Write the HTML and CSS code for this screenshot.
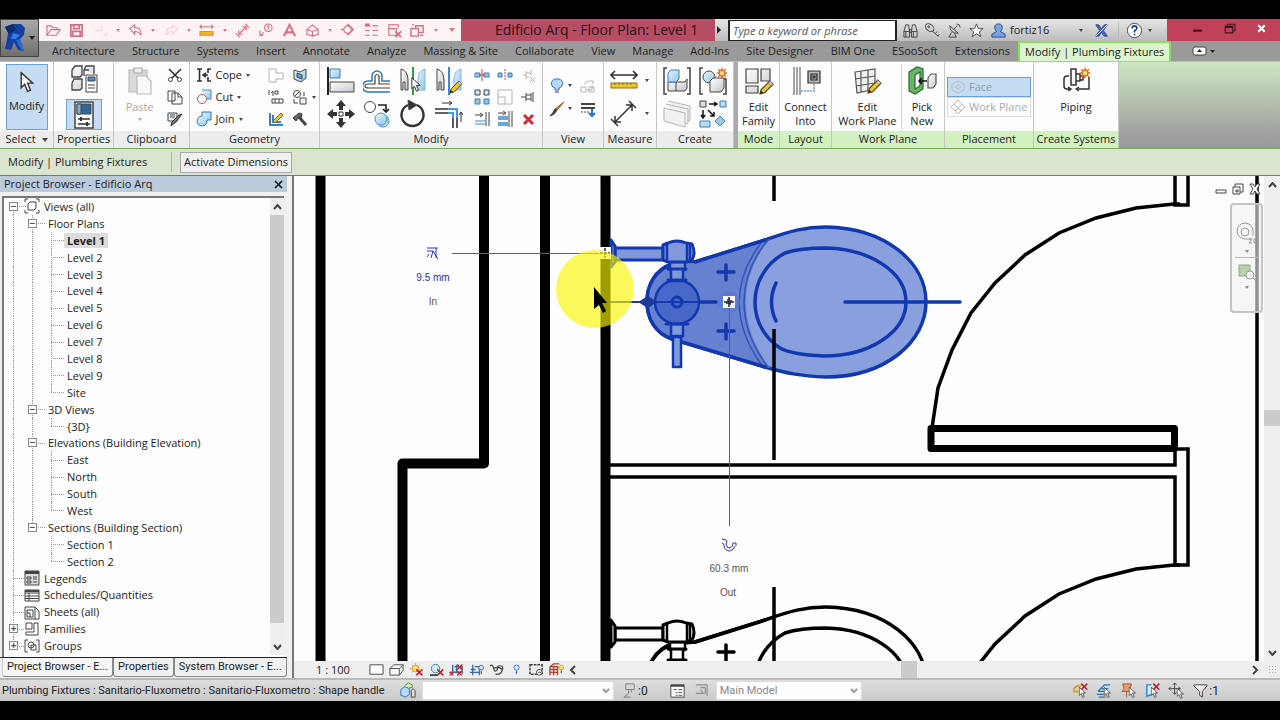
FILE: index.html
```html
<!DOCTYPE html>
<html lang="en">
<head>
<meta charset="utf-8">
<title>Edificio Arq - Floor Plan: Level 1</title>
<link rel="stylesheet" href="styles.css">
</head>
<body>
<svg class="defs" aria-hidden="true">
  <defs>
    <linearGradient id="glass" x1="0" y1="0" x2="1" y2="1"><stop offset="0" stop-color="#eaf6fc"/><stop offset="1" stop-color="#8cc6ea"/></linearGradient>
    <linearGradient id="steel" x1="0" y1="0" x2="1" y2="1"><stop offset="0" stop-color="#ffffff"/><stop offset="1" stop-color="#c4c7cc"/></linearGradient>
    <symbol id="pencil" viewBox="0 0 14 14"><path d="M1 13l1-4 8-8 3 3-8 8z" fill="#f2c62c" stroke="#5a4a20"/><path d="M10 1l3 3-2 1-2-2z" fill="#ddd" stroke="#666" stroke-width=".6"/><path d="M1 13l1-3 2 2z" fill="#222"/></symbol>
    <symbol id="spark" viewBox="0 0 12 12"><path d="M6 0l1.300 3L10.500 1.500 9 4.700 12 6 9 7.300l1.500 3.200L7.300 9 6 12 4.700 9 1.500 10.500 3 7.300 0 6l3-1.300L1.500 1.500 4.700 3z" fill="#e8701c"/><circle cx="6" cy="6" r="2.200" fill="#ffe08a"/></symbol>
    <symbol id="pointer" viewBox="0 0 12 18"><path d="M1 1v13l3-3 2.500 6 2.500-1-2.500-6H11z" fill="#fff" stroke="#333" stroke-width="1.200"/></symbol>
    <symbol id="redx" viewBox="0 0 10 10"><path d="M1 1l8 8M9 1L1 9" stroke="#c8202c" stroke-width="2.200"/></symbol>
    <g id="toilet" stroke-width="3.500" stroke-linejoin="round" stroke-linecap="round">
      <path class="bowl" d="M695 262L765 240C790 231 805 227 826 227C885 228 926 262 926 302C926 342 885 377 826 377C800 376 785 373 765 367L672 339C655 333 647 318 647 302C647 285 655 270 672 264Z"/>
      <path class="neck" d="M693 263L770 239C738 278 738 325 770 368L672 339C655 333 647 318 647 302C647 285 655 270 672 264Z"/>
      <path class="seam" d="M768 240C736 278 736 325 768 367M761 243C732 281 732 323 761 364" stroke-width="1.500"/>
      <path class="edge" d="M695 262L765 240M765 367L672 339C655 333 647 318 647 302C647 285 655 270 672 264"/>
      <path class="ink" d="M826 248C870 249 906 272 906 302C906 332 870 356 824 356C800 355 787 352 780 348C765 338 755 322 755 302C755 280 768 262 785 253C797 249 810 248 826 248Z"/>
      <path class="ink" d="M776 283Q767 302 776 321M845 302H960M653 302H716M726 265V280M718 272H734M726 324V339M718 331H734" stroke-width="3.500"/>
      <circle class="cap" cx="677" cy="302" r="22" stroke-width="2.500"/>
      <circle class="cap" cx="677" cy="302" r="5" stroke-width="3"/>
      <path class="ink" d="M651 302H702" stroke-width="2"/>
      <path class="body" d="M670 262H685V270H683V281H671V270H670ZM671 324H683V336H671ZM673 337H681V367H673Z" stroke-width="2.500"/>
      <path class="ink" d="M668 269H686M668 280H686M666 324H688" stroke-width="3"/>
      <path class="body" d="M615 248H663V260H615Z" stroke-width="3"/>
      <path class="body" d="M611 240L615 246V262L611 267Z" stroke-width="3"/>
      <path class="body" d="M663 245L668 243Q677 239 686 243L692 244Q696 253 692 260L686 262H668L663 260Z" stroke-width="3"/>
      <path class="ink" d="M667 243V261M687 243V261M690 244V260" stroke-width="2.500"/>
    </g>
  </defs>
</svg>

<div class="app">
<header class="top">
  <button class="logo" aria-label="Application menu">
    <svg width="22" height="30" viewBox="0 0 22 30"><path d="M1 4L9 1h8l4 4-1 7-4 4 4 12-6-1-4-8-3 8-6-1 2-9 1-7z" fill="#163f9e"/><path d="M1 4l8-3 3 6-7 4z" fill="#0c2a70"/><path d="M9 10l7 2-4 4-5 0z" fill="#2f7be8"/><path d="M12 17l4-1 4 12-3-1z" fill="#2a68d4"/></svg>
    <i class="caret"></i>
  </button>
  <div class="titlebar">
    <div class="qat">
      <button aria-label="Open"><svg viewBox="0 0 16 16"><path d="M1 13V3h5l1 2h5v2M1 13l4-6h10l-4 6z"/></svg></button>
      <button aria-label="Save"><svg viewBox="0 0 16 16"><path d="M2 2h12v12H2zM5 2v4h6V2M4 14V9h8v5" stroke-width="1.800"/></svg></button>
      <button class="faint" aria-label="Synchronize"><svg viewBox="0 0 16 16"><path d="M2 8h7V3M11 13h3v-3"/></svg></button>
      <i class="caret"></i>
      <button aria-label="Undo"><svg viewBox="0 0 16 16"><path d="M2 6l5-4v3q7-1 7 8-2-4-7-4v3z"/></svg></button>
      <i class="caret"></i>
      <button class="faint" aria-label="Redo"><svg viewBox="0 0 16 16"><path d="M14 6L9 2v3Q2 4 2 13q2-4 7-4v3z"/></svg></button>
      <i class="caret"></i>
      <button aria-label="Measure"><svg viewBox="0 0 16 16"><path d="M1 4h14M3 2L1 4l2 2M13 2l2 2-2 2"/><path d="M1 9h14v4H1z" fill="#f2b41c" stroke="#e08a50"/></svg></button>
      <i class="caret"></i>
      <button aria-label="Aligned dimension"><svg viewBox="0 0 16 16"><path d="M4 12l8-8M4 8v4h4M8 4h4v4M1 11l4 4M11 1l4 4"/></svg></button>
      <button aria-label="Tag"><svg viewBox="0 0 16 16"><circle cx="11" cy="5" r="4"/><path d="M10 4l1-1v4M2 8v5h4M2 14l4-4"/></svg></button>
      <button aria-label="Text"><svg viewBox="0 0 16 16"><path d="M2 14L8 2l6 12M4 10h8" stroke-width="2.200"/></svg></button>
      <button aria-label="3D view"><svg viewBox="0 0 16 16"><path d="M2 7l6-5 6 5v5l-6 2-6-2zM2 7l6 2 6-2M8 9v5"/></svg></button>
      <i class="caret"></i>
      <button aria-label="Section"><svg viewBox="0 0 16 16"><circle cx="8" cy="7" r="4"/><path d="M8 1l6 6-6 6M1 7h3" stroke-width="1.600"/></svg></button>
      <button aria-label="Thin lines"><svg viewBox="0 0 16 16"><path d="M1 3h6M9 3h6M1 8h5M9 8h6M1 13h5M9 13h6"/><path d="M1 2h5" stroke-width="3"/></svg></button>
      <button aria-label="Close hidden windows"><svg viewBox="0 0 16 16"><path d="M2 6V2h10v3M2 6h8v7H2z"/><path d="M9 9l6 6M15 9l-6 6" stroke-width="2"/></svg></button>
      <button aria-label="Switch windows"><svg viewBox="0 0 16 16"><path d="M1 6h8v8H1zM6 6V3h8v7H9M3 3V1M14 13h-3" stroke-width="1.500"/></svg></button>
      <i class="caret"></i>
      <i class="caret wide"></i>
    </div>
    <h1 class="title">Edificio Arq - Floor Plan: Level 1</h1>
    <div class="info">
      <button class="expand" aria-label="Toggle search"><svg width="6" height="8"><path d="M1 0l4 4-4 4z" fill="#222"/></svg></button>
      <input class="search" type="text" placeholder="Type a keyword or phrase" aria-label="Search">
      <button aria-label="Find"><svg viewBox="0 0 18 18"><path d="M2 10l2-7h3l1 7M10 10l1-7h3l2 7M2 10h6v6H2zM10 10h6v6h-6zM8 8h2v3H8zM4 10v6M12 10v6"/></svg></button>
      <button aria-label="Key"><svg viewBox="0 0 18 18"><path d="M8 9l7 6 1-2M12 12l2-2"/><ellipse cx="6" cy="6" rx="5" ry="3.500" transform="rotate(40 6 6)"/><circle cx="5" cy="5" r="1"/></svg></button>
      <button aria-label="Communication Center"><svg viewBox="0 0 18 18"><path d="M4 4q0 8 9 8zM8 8l4-4M6 11l-3 5h8l-2-4M11 2q4 0 4 4"/></svg></button>
      <button aria-label="Favorites"><svg viewBox="0 0 18 18"><path d="M9 2l2 5h5l-4 3.500 1.500 5L9 12.500 4.500 15.500 6 10.500 2 7h5z" fill="#fff"/></svg></button>
      <button class="user"><svg viewBox="0 0 18 18"><path d="M9 2c6 0 4 7 2 8l5 3v3H2v-3l5-3C5 9 3 2 9 2z" fill="#7aa3e0" stroke="#29488c"/></svg>fortiz16</button>
      <i class="caret"></i>
      <button class="exchange" aria-label="Exchange"><svg viewBox="0 0 18 18"><path d="M3 3h3l3 4 3-4h3l-4 6 4 6h-3l-3-4-3 4H3l4-6z" fill="#496cc0" stroke="#24418c"/><path d="M3 15L15 3" stroke="#fff"/></svg></button>
      <button class="help" aria-label="Help"><svg viewBox="0 0 18 18"><circle cx="9" cy="9" r="7.500" fill="#fff"/><path d="M6.500 7q0-3 2.500-3t2.500 2.500Q11.500 8 9 9.500v1.500M9 12.500V14" stroke="#1b3c94" stroke-width="1.800"/></svg></button>
      <i class="caret"></i>
    </div>
    <div class="window">
      <button aria-label="Minimize"><svg viewBox="0 0 12 12"><path d="M2 8h8" stroke-width="2"/></svg></button>
      <button aria-label="Restore"><svg viewBox="0 0 12 12"><path d="M2 4h7v6H2zM4 4V2h7v6H9M2 5h7"/></svg></button>
      <button aria-label="Close"><svg class="close" viewBox="0 0 12 12"><path d="M3 3l6 6M9 3L3 9" stroke-width="2"/></svg></button>
    </div>
  </div>
  <nav class="tabs">
    <button>Architecture</button><button>Structure</button><button>Systems</button><button>Insert</button><button>Annotate</button><button>Analyze</button><button>Massing &amp; Site</button><button>Collaborate</button><button>View</button><button>Manage</button><button>Add-Ins</button><button>Site Designer</button><button>BIM One</button><button>ESooSoft</button><button>Extensions</button><button class="on">Modify | Plumbing Fixtures</button>
    <button class="cycle" aria-label="Minimize ribbon"><svg width="24" height="10"><rect x="1" y="1" width="13" height="8" rx="2" fill="#fff" stroke="#444"/><path d="M5 6l2.500-3L10 6z" fill="#222"/><path d="M18 4h5l-2.500 3z" fill="#222"/></svg></button>
  </nav>
</header>

<section class="ribbon">
  <div class="panel w54">
    <div class="tools"><button class="big on select"><svg width="14" height="22" viewBox="0 0 12 18"><use href="#pointer"/></svg><span>Modify</span></button></div>
    <div class="name">Select <i class="caret wide"></i></div>
  </div>
  <div class="panel w60">
    <div class="tools stack">
      <button aria-label="Type properties"><svg width="30" height="30" viewBox="0 0 30 30"><path d="M3 6l3-4h7v9l-2 2H3zM15 6l2-4h8v8M3 19l2-4h8v9l-2 2H3zM15 6h5M15 6v6" fill="url(#steel)" stroke="#444" stroke-width="1.300"/><rect x="17" y="11" width="11" height="17" fill="#fff" stroke="#444"/><path d="M19 13h7v4h-7z" fill="#4d8cc8"/><path d="M19 21h7M19 24h7" stroke="#444"/></svg></button>
      <button class="on" aria-label="Properties"><svg width="24" height="28" viewBox="0 0 24 28"><rect x="3" y="1" width="18" height="26" fill="#fff" stroke="#444" stroke-width="1.500"/><path d="M5 3h14v10H5z" fill="#2f6898"/><path d="M5 3h4v10H5z" fill="#7db2dc"/><path d="M6 18h12M6 23h12" stroke="#333" stroke-width="1.300"/><path d="M9 16v4M15 21v4" stroke="#333" stroke-width="2"/></svg></button>
    </div>
    <div class="name">Properties</div>
  </div>
  <div class="panel w75">
    <div class="tools">
      <button class="big off"><svg width="28" height="30" viewBox="0 0 28 30"><path d="M3 4h18v22H3z" fill="#d9d9d9" stroke="#bbb"/><path d="M8 2h8v5H8z" fill="#eee" stroke="#aaa"/><path d="M11 10h9l5 5v13H11z" fill="#f8f8f8" stroke="#bbb"/></svg><span>Paste</span><i class="caret"></i></button>
      <div class="col">
        <button aria-label="Cut"><svg viewBox="0 0 16 16"><path d="M2 2l9 9M14 2l-9 9" stroke="#333" stroke-width="1.600"/><circle cx="3.500" cy="12.500" r="2"/><circle cx="12.500" cy="12.500" r="2"/></svg></button>
        <button aria-label="Copy"><svg viewBox="0 0 16 16"><path d="M1 2h7v10H1zM5 4h6l4 4v7H5zM11 4v4h4" fill="#fff"/></svg></button>
        <button aria-label="Match type"><svg viewBox="0 0 16 16"><path d="M1 2h9v8H1zM3 4h5M3 6h5" fill="#eaf3fb"/><path d="M15 3l-6 8-5 4 1-4 7-7z" fill="#777" stroke="#333"/></svg></button>
      </div>
    </div>
    <div class="name">Clipboard</div>
  </div>
  <div class="panel w130">
    <div class="tools">
      <div class="col words">
        <button><svg viewBox="0 0 16 16"><path d="M1 2h5M1 14h5M3.500 2v12M7 8h5M10 6L7 8l3 2M15 2h-3v4M15 14h-3v-4" stroke="#333" stroke-width="1.600"/></svg>Cope <i class="caret"></i></button>
        <button><svg viewBox="0 0 16 16"><path d="M6 1h9v9h-5" fill="url(#glass)" stroke="#4a86b4"/><circle cx="6" cy="10" r="4.500" fill="#fff" stroke="#c05050"/></svg>Cut <i class="caret"></i></button>
        <button><svg viewBox="0 0 16 16"><path d="M6 1h9v8h-4a5 5 0 1 1-5-4z" fill="url(#glass)" stroke="#2f74ac"/></svg>Join <i class="caret"></i></button>
      </div>
      <div class="col">
        <button class="dim" aria-label="Wall joins"><svg viewBox="0 0 16 16"><path d="M1 2h7v4h7v6H8v3H1z"/></svg></button>
        <button aria-label="Beam joins"><svg viewBox="0 0 16 16"><path d="M1 1v5M3 4l2-2v5M7 2h3v3H7zM4 10h11v4H4zM7 10v4M11 10v4"/></svg></button>
        <button aria-label="Paint"><svg viewBox="0 0 16 16"><path d="M2 2v12h13M5 4v7h8" stroke="#3b7fc0" stroke-width="2"/><path d="M5 10l8-8 2 2-8 8z" fill="#f2c14a" stroke="#8a6020"/></svg></button>
      </div>
      <div class="col">
        <button aria-label="Split face"><svg viewBox="0 0 16 16"><path d="M2 3l6 2 6-3v9l-5 4-7-3z" fill="url(#glass)"/><path d="M5 6l5 2v4l-5-2z" fill="#5ea4dc"/></svg></button>
        <button aria-label="Demolish"><svg viewBox="0 0 16 16"><circle cx="5" cy="5" r="3.500"/><path d="M3 7l4-4M8 9h6v6H8zM2 10v4h4M12 3v4"/></svg></button>
        <button aria-label="Hammer"><svg viewBox="0 0 16 16"><path d="M1 7l6-5 3 1-1 4-3 0-2 3z" fill="#666" stroke="#333"/><path d="M7 6l7 8" stroke="#444" stroke-width="3"/></svg></button>
      </div>
      <i class="caret"></i>
    </div>
    <div class="name">Geometry</div>
  </div>
  <div class="panel w223">
    <div class="tools">
      <div class="grid4">
        <button aria-label="Align"><svg viewBox="0 0 28 28"><path d="M1 0v28" stroke="#222" stroke-width="2"/><path d="M3 2h10v9H3z" fill="url(#glass)" stroke="#3b7fb4"/><path d="M3 15h24v10H3z" fill="url(#steel)"/></svg></button>
        <button aria-label="Offset"><svg viewBox="0 0 28 28"><path d="M27 25H5a5 5 0 0 1 0-11h4V9a5 5 0 0 1 10 0v5h8" stroke="#2f78b0" stroke-width="1.500"/><path d="M27 21H6q-4 0-4-2t3-2h7V9q2-3 4 0v8h11" stroke="#444" stroke-width="1.200"/></svg></button>
        <button aria-label="Mirror pick axis"><svg viewBox="0 0 28 28"><path d="M2 2q7 2 7 11v10H6v-8H4v8H2z" fill="url(#steel)"/><path d="M26 2q-7 2-7 11v10h7z" fill="url(#glass)" stroke="#8bb6d4"/><path d="M14 0v28" stroke="#2fa04a" stroke-width="2"/><use href="#pointer" x="12" y="10" width="10" height="15"/></svg></button>
        <button aria-label="Mirror draw axis"><svg viewBox="0 0 28 28"><path d="M2 2q7 2 7 11v10H6v-8H4v8H2z" fill="url(#steel)"/><path d="M26 2q-7 2-7 11v10h7z" fill="url(#glass)" stroke="#8bb6d4"/><path d="M14 0v28" stroke="#3b8ad0" stroke-width="2"/><use href="#pencil" x="14" y="13" width="14" height="14"/></svg></button>
        <button aria-label="Move"><svg viewBox="0 0 28 28"><path d="M14 0l5 6h-3v4h-4V6H9zM14 28l5-6h-3v-4h-4v4H9zM0 14l6-5v3h4v4H6v3zM28 14l-6-5v3h-4v4h4v3z" fill="#333" stroke="none"/><path d="M12 12h4v4h-4z" stroke="#333"/></svg></button>
        <button aria-label="Copy element"><svg viewBox="0 0 28 28"><circle cx="7" cy="7" r="5.500" fill="#fff"/><path d="M15 5h8v6M20 9l3 3 3-3" stroke="#222" stroke-width="1.600"/><circle cx="20" cy="21" r="6" fill="#b8dcf2" stroke="#4a90c4"/><circle cx="18" cy="19" r="6" fill="url(#glass)" stroke="#4a90c4"/></svg></button>
        <button aria-label="Rotate"><svg viewBox="0 0 28 28"><path d="M18 5A11 11 0 1 1 9 5" stroke="#333" stroke-width="2.400"/><path d="M9 0l9 5-8 5z" fill="#333"/></svg></button>
        <button aria-label="Trim"><svg viewBox="0 0 28 28"><path d="M0 9h14M0 13h14M18 17v11M22 17v11" stroke="#333" stroke-width="1.600"/><path d="M13 9h9v9M13 13h5v5" stroke="#4a9bd4" stroke-width="2"/><path d="M7 3h10M14 1l3 2-3 2M26 22V12M24 15l2-3 2 3" stroke="#333"/></svg></button>
      </div>
      <div class="grid3">
        <button aria-label="Split"><svg viewBox="0 0 16 16"><path d="M1 6h5v4H1zM10 6h5v4h-5z" fill="#8cc6ea" stroke="#3b7fb4"/><path d="M8 2v12M5 8h6" stroke="#c44"/></svg></button>
        <button aria-label="Split with gap"><svg viewBox="0 0 16 16"><path d="M1 6h4v4H1zM11 6h4v4h-4z" fill="#8cc6ea" stroke="#3b7fb4"/><path d="M8 2v12" stroke="#c44" stroke-dasharray="2 1"/></svg></button>
        <button class="dim" aria-label="Unpin"><svg viewBox="0 0 16 16"><path d="M3 8h3M6 4v8M6 6h5M6 10h3M11 3v5M10 10l5 5M15 10l-5 5"/></svg></button>
        <button aria-label="Array"><svg viewBox="0 0 16 16"><path d="M1 1h5v5H1zM10 1h5v5h-5z" fill="#cfe6f6"/><path d="M1 10h5v5H1zM10 10h5v5h-5z" fill="#8cc6ea" stroke="#3b7fb4"/></svg></button>
        <button class="dim" aria-label="Scale"><svg viewBox="0 0 16 16"><path d="M1 1h14v14H1zM1 8h7v7"/></svg></button>
        <button aria-label="Pin"><svg viewBox="0 0 16 16"><path d="M1 8h5M6 4v8M6 6h5M6 10h5M11 4v8M13 3v10"/></svg></button>
        <button aria-label="Trim single"><svg viewBox="0 0 16 16"><path d="M1 4h7M6 2l3 2-3 2M12 1v14M15 1v14"/><path d="M1 10h10M1 13h10" stroke="#3b8ad0"/></svg></button>
        <button aria-label="Trim multiple"><svg viewBox="0 0 16 16"><path d="M1 2h7M6 0l3 2-3 2M12 0v16M15 0v16"/><path d="M1 6h10M1 8h10M1 12h10M1 14h10" stroke="#3b8ad0" stroke-width="1.300"/></svg></button>
        <button aria-label="Delete"><svg viewBox="0 0 16 16"><path d="M4 4l9 9M13 4l-9 9" stroke="#d02c3c" stroke-width="3"/></svg></button>
      </div>
    </div>
    <div class="name">Modify</div>
  </div>
  <div class="panel w61">
    <div class="tools"><div class="gridv">
      <button aria-label="Hide"><svg viewBox="0 0 16 16"><path d="M8 1a4.500 4.500 0 0 1 2 9v2H6v-2A4.500 4.500 0 0 1 8 1z" fill="#b4d8f8" stroke="#3468b8"/><path d="M6 14h4"/></svg></button><i class="caret"></i>
      <button class="dim" aria-label="Displace"><svg viewBox="0 0 16 16"><path d="M1 9h5v5H1zM6 12h6V7M9 9h5v5H9zM4 6l4-3h5v3"/></svg></button>
      <button aria-label="Override"><svg viewBox="0 0 16 16"><path d="M15 1l-7 8-2-1z" fill="#d49040" stroke="#8a5a20"/><path d="M8 9q-2 5-7 6 3-3 5-7z" fill="#444"/></svg></button><i class="caret"></i>
      <button aria-label="Linework"><svg viewBox="0 0 16 16"><path d="M1 3h14M1 7h14" stroke-width="2"/><path d="M1 11h8" stroke-dasharray="2 1"/><path d="M12 8v6M9 12l3 3 3-3" stroke="#2d70c4" stroke-width="2"/></svg></button>
    </div></div>
    <div class="name">View</div>
  </div>
  <div class="panel w53">
    <div class="tools"><div class="gridm">
      <button aria-label="Measure between"><svg viewBox="0 0 28 28"><path d="M1 8h26M5 4L1 8l4 4M23 4l4 4-4 4" stroke="#333" stroke-width="1.600"/><path d="M1 16h26v5H1z" fill="#f2c22c" stroke="#8a6a14"/><path d="M5 16v2M9 16v2M13 16v2M17 16v2M21 16v2" stroke="#8a6a14"/></svg></button><i class="caret"></i>
      <button aria-label="Dimension"><svg viewBox="0 0 28 28"><path d="M5 22L22 5M5 16v6h6M16 5h6v6M1 19l7 7M19 1l7 7" stroke="#333" stroke-width="1.500"/></svg></button><i class="caret"></i>
    </div></div>
    <div class="name">Measure</div>
  </div>
  <div class="panel w77">
    <div class="tools"><div class="grid2">
      <button aria-label="Create assembly"><svg viewBox="0 0 28 28"><path d="M4 1H1v26h3M24 1h3v26h-3" stroke-width="1.500"/><path d="M5 15h17l2-3v9l-2 3H5zM13 15v9" fill="url(#steel)"/><path d="M5 6l3-3h8v9l-3 3H5z" fill="url(#glass)" stroke="#3b7fb4"/></svg></button>
      <button aria-label="Create group"><svg viewBox="0 0 28 28"><path d="M4 1H1v26h3M24 12h3v15h-3" stroke-width="1.500"/><circle cx="10" cy="10" r="6" fill="url(#glass)"/><path d="M11 14l3-3h11v10l-3 4H11z" fill="url(#steel)"/><use href="#spark" x="17" y="0" width="12" height="12"/></svg></button>
      <button class="dim" aria-label="Create parts"><svg viewBox="0 0 28 28"><path d="M5 1l22 5v14l-3 1M3 4l22 5v14l-3 1M1 8l21 5v14L1 21z" fill="#f1f1f1"/></svg></button>
      <button aria-label="Create similar"><svg viewBox="0 0 28 28"><path d="M1 1h6v6H1z" fill="#ddd"/><path d="M21 1h6v6h-6zM1 21h10v6H1z" fill="url(#glass)" stroke="#3b7fb4"/><path d="M21 16l5 5-5 5-5-5z" fill="#9cc8ec" stroke="#3b7fb4"/><path d="M10 4h8M15 2l3 2-3 2M4 10v8M2 15l2 3 2-3M9 10l6 6M15 12v4h-4" stroke="#111" stroke-width="1.500"/></svg></button>
    </div></div>
    <div class="name">Create</div>
  </div>
  <div class="panel green first w46">
    <div class="tools"><button class="big"><svg width="30" height="30" viewBox="0 0 30 30"><path d="M2 3h12v14H2zM17 3h9v12h-9zM2 20h12v7H2z" fill="url(#steel)" stroke="#444"/><use href="#pencil" x="15" y="14" width="15" height="15"/></svg><span>Edit<br>Family</span></button></div>
    <div class="name">Mode</div>
  </div>
  <div class="panel green w52">
    <div class="tools"><button class="big"><svg width="30" height="30" viewBox="0 0 30 30"><path d="M3 1v28M6 1v28M9 1v28" stroke="#888" stroke-width="1.500"/><path d="M17 5h12v12H17z" fill="#bbb" stroke="#333"/><path d="M20 8h6v6h-6zM22 10h2v2h-2z" stroke="#222" fill="none"/><path d="M23 18v7H10" stroke="#2d80c4" stroke-dasharray="2 1" fill="none"/></svg><span>Connect<br>Into</span></button></div>
    <div class="name">Layout</div>
  </div>
  <div class="panel green w113">
    <div class="tools">
      <button class="big broad"><svg width="30" height="30" viewBox="0 0 30 30"><path d="M3 6l20-3v20L5 27zM9 5v21M16 4v20M3 13l20-3M4 20l19-3" fill="#eee" stroke="#555"/><use href="#pencil" x="15" y="13" width="15" height="15"/></svg><span>Edit<br>Work Plane</span></button>
      <button class="big divided"><svg width="30" height="30" viewBox="0 0 30 30"><path d="M2 6l8-5 6 2v20l-8 5-6-3z" fill="#6ab46a" stroke="#246a2c"/><path d="M8 9l5-3v14l-5 3z" fill="#fff" stroke="#246a2c"/><path d="M12 15h8M15 12l-3 3 3 3" stroke="#111" stroke-width="1.600" fill="none"/><path d="M21 12l3-4h5v10l-3 4h-5z" fill="url(#steel)" stroke="#555"/></svg><span>Pick<br>New</span></button>
    </div>
    <div class="name">Work Plane</div>
  </div>
  <div class="panel green w89">
    <div class="tools place">
      <button class="row on"><svg viewBox="0 0 16 16"><path d="M2 5l6-3 6 3v6l-6 3-6-3zM5 8l3-2 3 2-3 2z"/></svg>Face</button>
      <button class="row"><svg viewBox="0 0 16 16"><path d="M8 1l7 7-7 7-7-7zM4 5l7 7M12 5l-7 7"/></svg>Work Plane</button>
    </div>
    <div class="name">Placement</div>
  </div>
  <div class="panel green w85">
    <div class="tools"><button class="big"><svg width="30" height="30" viewBox="0 0 30 30"><path d="M10 3h5v16h-5zM15 8h4v7h-4M19 10h3v4h-3M8 10H6q-3 0-3 3v7q0 3 3 3h4M7 21l3 2-3 2M15 23h13V11" fill="none" stroke="#333" stroke-width="1.500"/><path d="M18 21l-3 2 3 2" stroke="#333" fill="none"/><use href="#spark" x="18" y="1" width="12" height="12"/></svg><span>Piping</span></button></div>
    <div class="name">Create Systems</div>
  </div>
</section>

<div class="options"><span>Modify | Plumbing Fixtures</span><button>Activate Dimensions</button></div>

<main class="work">
  <aside class="dock">
    <div class="dock-head"><h2>Project Browser - Edificio Arq</h2><button aria-label="Close browser"><svg width="9" height="9"><path d="M1 1l7 7M8 1L1 8" stroke="#111" stroke-width="1.600"/></svg></button></div>
    <div class="dock-body">
      <ul class="tree">
        <li><b class="c t first"><button aria-label="Collapse">−</button></b><svg class="ti" viewBox="0 0 16 16"><path d="M4 1H1v3M12 1h3v3M1 12v3h3M15 12v3h-3M4 6l2-2h6v6l-2 2H4z"/></svg><span>Views (all)</span></li>
        <li><b class="c v"></b><b class="c t"><button aria-label="Collapse">−</button></b><span class="sub">Floor Plans</span></li>
        <li><b class="c v"></b><b class="c v"></b><b class="c h"></b><span class="sub sel">Level 1</span></li>
        <li><b class="c v"></b><b class="c v"></b><b class="c h"></b><span class="sub">Level 2</span></li>
        <li><b class="c v"></b><b class="c v"></b><b class="c h"></b><span class="sub">Level 3</span></li>
        <li><b class="c v"></b><b class="c v"></b><b class="c h"></b><span class="sub">Level 4</span></li>
        <li><b class="c v"></b><b class="c v"></b><b class="c h"></b><span class="sub">Level 5</span></li>
        <li><b class="c v"></b><b class="c v"></b><b class="c h"></b><span class="sub">Level 6</span></li>
        <li><b class="c v"></b><b class="c v"></b><b class="c h"></b><span class="sub">Level 7</span></li>
        <li><b class="c v"></b><b class="c v"></b><b class="c h"></b><span class="sub">Level 8</span></li>
        <li><b class="c v"></b><b class="c v"></b><b class="c h"></b><span class="sub">Level 9</span></li>
        <li><b class="c v"></b><b class="c v"></b><b class="c h end"></b><span class="sub">Site</span></li>
        <li><b class="c v"></b><b class="c t"><button aria-label="Collapse">−</button></b><span class="sub">3D Views</span></li>
        <li><b class="c v"></b><b class="c v"></b><b class="c h end"></b><span class="sub">{3D}</span></li>
        <li><b class="c v"></b><b class="c t"><button aria-label="Collapse">−</button></b><span class="sub">Elevations (Building Elevation)</span></li>
        <li><b class="c v"></b><b class="c v"></b><b class="c h"></b><span class="sub">East</span></li>
        <li><b class="c v"></b><b class="c v"></b><b class="c h"></b><span class="sub">North</span></li>
        <li><b class="c v"></b><b class="c v"></b><b class="c h"></b><span class="sub">South</span></li>
        <li><b class="c v"></b><b class="c v"></b><b class="c h end"></b><span class="sub">West</span></li>
        <li><b class="c v"></b><b class="c t end"><button aria-label="Collapse">−</button></b><span class="sub">Sections (Building Section)</span></li>
        <li><b class="c v"></b><b class="c"></b><b class="c h"></b><span class="sub">Section 1</span></li>
        <li><b class="c v"></b><b class="c"></b><b class="c h end"></b><span class="sub">Section 2</span></li>
        <li><b class="c h"></b><svg class="ti" viewBox="0 0 16 16"><path d="M1 1h14v14H1z" fill="#ddd"/><path d="M1 2.500h14" stroke-width="3"/><path d="M3 7h4v2H3zM3 11h4v2H3zM9 7h4M9 9h4M9 12h4"/></svg><span>Legends</span></li>
        <li><b class="c h"></b><svg class="ti" viewBox="0 0 16 16"><path d="M1 3h14v11H1zM1 6h14M1 9h14M1 11.500h14M5 6v8"/><path d="M1 4h14" stroke-width="2"/></svg><span>Schedules/Quantities</span></li>
        <li><b class="c h"></b><svg class="ti" viewBox="0 0 16 16"><path d="M1 3h10l4 4v8H1zM11 3v12M3 6h6v7H3zM3 9h3v4"/></svg><span>Sheets (all)</span></li>
        <li><b class="c t"><button aria-label="Expand">+</button></b><svg class="ti" viewBox="0 0 16 16"><path d="M2 2h6v6H2zM10 2h4v12H2v-3h8z"/></svg><span>Families</span></li>
        <li><b class="c t end"><button aria-label="Expand">+</button></b><svg class="ti" viewBox="0 0 16 16"><path d="M4 2H1v12h3M12 2h3v12h-3M7 7h5v5H7z"/><circle cx="7" cy="7" r="3"/></svg><span>Groups</span></li>
      </ul>
      <div class="vscroll"><button aria-label="Scroll up"><svg width="9" height="6"><path d="M1 5l3.500-4L8 5" class="chev"/></svg></button><i class="thumb"></i><button aria-label="Scroll down"><svg width="9" height="6"><path d="M1 1l3.500 4L8 1" class="chev"/></svg></button></div>
    </div>
    <div class="dock-tabs"><button class="on">Project Browser - E...</button><button>Properties</button><button>System Browser - E...</button></div>
  </aside>

  <section class="view">
    <div class="canvas-row">
      <div class="canvas">
        <svg class="plan" viewBox="294 176 970 485" preserveAspectRatio="xMinYMin slice" role="img" aria-label="Floor plan">
          <g stroke="#000" fill="none">
            <path d="M320.500 170V670M484 170V463.500H402.500V670M545 170V670M605.500 170V670" stroke-width="10" stroke-linejoin="round"/>
            <path d="M774 170V201M774 587V670" stroke-width="3.500"/>
            <path d="M610 465H1175V450M610 477H1175V565H1188V449H1177M1175 170V205H1188V170M1257 170V670" stroke-width="3.500"/>
            <path d="M1180 204H1174L1136 208 1096 218 1059 233 1025 255 995 283 971 313 952 350 938 388 932 428" stroke-width="3.500"/>
            <path d="M1180 565H1174L1136 569 1096 579 1059 594 1025 616 995 644 975 669" stroke-width="3.500"/>
            <path d="M931 428.500H1174.500V448.500H931Z" stroke-width="7" stroke-linejoin="round"/>
          </g>
          <use href="#toilet" class="plain" transform="translate(0 380)"/>
          <use href="#toilet" class="picked"/>
          <path d="M610 302H652M640 302l8-5 7 5-7 5z" stroke="#1a3a9c" stroke-width="2" fill="#1a3a9c"/>
          <path d="M774 329V460" stroke="#000" stroke-width="3.500"/>
          <path d="M452 253.500H600M729.500 308V526" stroke="#5a50c4"/>
          <circle cx="729" cy="302" r="11" fill="#5878cc" opacity=".6"/>
          <g fill="#fff"><path d="M723 296h12v12h-12z"/><path d="M599 247h12v12h-12z"/></g>
          <g stroke="#123" stroke-width="1.500" fill="none"><path d="M729 297v10M724 302h10M727 300h4v4h-4zM605 248v10M600 253h10" stroke-dasharray="3 1"/></g>
          <circle cx="595" cy="289" r="39" fill="#f8f600" opacity=".64"/>
          <path d="M594 287V309L599 305 603 313 606 311 602 303H607Z" fill="#000"/>
          <g stroke="#3030c0" fill="none"><path d="M427 248h11M427 251h6l5 8M436 248v10M429 254l-2 3M433 251l-2 7"/><path d="M722 539l4 1q2 2 0 4 1 5 4 4t3-5h3v3M722 543q2 0 2 3 1 5 6 5 4-1 5-5"/></g>
          <g class="notes" text-anchor="middle"><text x="433" y="281" class="dim-in">9.5 mm</text><text x="433" y="305">In</text><text x="729" y="572">60.3 mm</text><text x="728" y="596">Out</text></g>
        </svg>
        <div class="mdi">
          <button aria-label="Minimize view"><svg viewBox="0 0 12 12"><path d="M1 7h10v3H1z"/></svg></button>
          <button aria-label="Restore view"><svg viewBox="0 0 12 12"><path d="M1 4h7v7H1zM3 4V1h8v8H8M4 7h2v2H4z"/></svg></button>
          <button aria-label="Close view"><svg viewBox="0 0 12 12"><path d="M1 1h3l2 3 2-3h3L8 6l3 5H8L6 8l-2 3H1l3-5z"/></svg></button>
        </div>
        <div class="navbar">
          <button aria-label="Steering wheel"><svg width="24" height="24" viewBox="0 0 24 24"><path d="M16 17H10a8 8 0 1 1 8-8v5"/><circle cx="10" cy="10" r="4"/><path d="M14 17h3l-3 4h3M19 17h2v4h-2z"/></svg></button>
          <i class="caret"></i><hr>
          <button aria-label="Zoom region"><svg width="20" height="20" viewBox="0 0 20 20"><path d="M2 3h11v11H2z" fill="#b9d0ae" stroke="#8fa888"/><circle cx="13" cy="13" r="4" fill="#f4f4f4"/><path d="M16 16l3 3"/></svg></button>
          <i class="caret"></i>
        </div>
      </div>
      <div class="vscroll main"><button aria-label="Scroll up"><svg width="9" height="6"><path d="M1 5l3.500-4L8 5" class="chev"/></svg></button><i class="thumb"></i><button aria-label="Scroll down"><svg width="9" height="6"><path d="M1 1l3.500 4L8 1" class="chev"/></svg></button></div>
    </div>
    <div class="viewbar">
      <button class="scale">1 : 100</button>
      <button aria-label="Detail level"><svg viewBox="0 0 16 16"><path d="M1 3h14v10H1z" fill="#fff"/></svg></button>
      <button aria-label="Visual style"><svg viewBox="0 0 16 16"><path d="M1 7l4-4h10v6l-4 5H1zM1 7h10v7M11 7l4-4" fill="#fff"/></svg></button>
      <button aria-label="Sun path off"><svg viewBox="0 0 16 16"><circle cx="7" cy="7" r="3.500" fill="#fce06a" stroke="#d89a20"/><path d="M7 1v2M1 7h2M3 3l1 1M11 3l-1 1M3 11l1-1" stroke="#d89a20"/><use href="#redx" x="7" y="7" width="8" height="8"/></svg></button>
      <button aria-label="Shadows off"><svg viewBox="0 0 16 16"><circle cx="7" cy="7" r="4.500" fill="#d4e8f8" stroke="#3b7fb4"/><path d="M1 14h8" stroke-width="2"/><use href="#redx" x="8" y="7" width="8" height="8"/></svg></button>
      <button aria-label="Crop view"><svg viewBox="0 0 16 16"><path d="M4 3v10M1 11h12M6 5h8v8M8 3v9" stroke="#3b6ca4" stroke-width="1.600"/><use href="#redx" x="8" y="2" width="7" height="7"/><use href="#redx" x="8" y="9" width="6" height="6"/><use href="#redx" x="0" y="10" width="5" height="5"/></svg></button>
      <button aria-label="Show crop region"><svg viewBox="0 0 16 16"><path d="M4 3v11M1 11h10M6 5h5v9M2 8h5" stroke="#3b6ca4" stroke-width="1.400"/><circle cx="13" cy="6" r="2.500" fill="#cfe4fa" stroke="#3b7fb4"/><path d="M13 9v4"/></svg></button>
      <button aria-label="Reveal hidden"><svg viewBox="0 0 16 16"><path d="M1 4q3-2 4 3t4 1q-1-4 3-4t2 5-7 4M5 7q5-3 9 1" stroke-width="1.300"/></svg></button>
      <button aria-label="Temporary hide"><svg viewBox="0 0 16 16"><circle cx="8" cy="6" r="2.800" fill="#d8ecff" stroke="#3b7fd4"/><path d="M8 9v4M7 11h2" stroke="#3b6fb4"/></svg></button>
      <button aria-label="Temporary view properties"><svg viewBox="0 0 16 16"><path d="M1 3h13v10H1z" stroke-dasharray="3 1" stroke-width="1.600"/><circle cx="11" cy="11" r="3" fill="#fff"/><path d="M10 11h3"/></svg></button>
      <button aria-label="Analytical model"><svg viewBox="0 0 16 16"><path d="M1 5l4-3h6M1 5v9M5 5v9M9 5v9M1 5h9M1 8h9M1 11h9" stroke="#b04438" stroke-width="1.400"/><circle cx="13" cy="6" r="2.500" fill="#ffe27a" stroke="#d89a20"/><path d="M13 9v3"/></svg></button>
      <button class="narrow" aria-label="Scroll left"><svg viewBox="0 0 8 10"><path d="M6 1L2 5l4 4" class="chev"/></svg></button>
      <div class="htrack"><i></i></div>
      <button class="narrow" aria-label="Scroll right"><svg viewBox="0 0 8 10"><path d="M2 1l4 4-4 4" class="chev"/></svg></button>
      <span class="grip"></span>
    </div>
  </section>
</main>

<footer class="status">
  <p>Plumbing Fixtures : Sanitario-Fluxometro : Sanitario-Fluxometro : Shape handle</p>
  <button aria-label="Worksharing"><svg viewBox="0 0 18 18"><path d="M2 8l4-3 5 2v6l-4 3-5-2z" fill="#bcdcf4" stroke="#2f70b4"/><path d="M6 4l4-3 4 2v3h-3" fill="#d8eeb8" stroke="#4a9030"/><path d="M13 9l2-2 2 2v7h-4z" fill="#ddd"/></svg></button>
  <select class="workset" aria-label="Active workset"><option></option></select>
  <button class="faded" aria-label="Editing requests"><svg viewBox="0 0 18 18"><path d="M5 2h9v6H5zM8 8v4l-5 4h7M11 8v3"/></svg></button><span class="count">:0</span>
  <button class="mid" aria-label="Design options"><svg viewBox="0 0 18 18"><path d="M2 3h14v13H2z" fill="#fff"/><path d="M2 4h14" stroke-width="2"/><path d="M5 8h3M10 8h4M7 11h2M10 11h4M7 14h2M10 14h4"/></svg></button>
  <button class="faded" aria-label="Exclude options"><svg viewBox="0 0 18 18"><path d="M3 3h12v12M3 12h8l-3-4M8 6h5v7" fill="#ccc"/></svg></button>
  <select class="model" aria-label="Design option"><option>Main Model</option></select>
  <div class="picks">
    <button aria-label="Select links"><svg viewBox="0 0 18 18"><path d="M2 7l4-3h4M2 7v3h5" stroke="#d4a41c" stroke-width="2"/><use href="#redx" x="9" y="1" width="8" height="8"/><use href="#pointer" x="7" y="5" width="8" height="12"/></svg></button>
    <button aria-label="Select underlay"><svg viewBox="0 0 18 18"><path d="M2 10l7-7h6M2 10h7M1 13h9M3 16h7M6 7h7" stroke="#2f74b8" stroke-width="1.300"/><use href="#pointer" x="8" y="5" width="8" height="12"/></svg></button>
    <button aria-label="Select pinned"><svg viewBox="0 0 18 18"><path d="M3 2h9v2h-1v4l2 2H2l2-2V4H3zM7 10v6" fill="#e8a070" stroke="#a85428"/><use href="#pointer" x="9" y="5" width="8" height="12"/></svg></button>
    <button aria-label="Select by face"><svg viewBox="0 0 18 18"><path d="M8 3H3v12l6-2" fill="#d4ecfa" stroke="#2f84c4" stroke-width="1.500"/><use href="#redx" x="9" y="1" width="8" height="8"/><use href="#pointer" x="7" y="5" width="8" height="12"/></svg></button>
    <button aria-label="Drag on selection"><svg viewBox="0 0 18 18"><path d="M7 1v12M1 7h12M5 3l2-2 2 2M3 5L1 7l2 2M11 5l2 2-2 2M5 11l2 2 2-2"/><use href="#pointer" x="9" y="6" width="8" height="12"/></svg></button>
    <button aria-label="Filter"><svg viewBox="0 0 18 18"><path d="M2 3h14v1l-5 6v6l-3-2v-4L2 4z" fill="url(#steel)"/></svg></button><span class="count">:1</span>
  </div>
</footer>
</div>
</body>
</html>
```
FILE: styles.css
```css
* { box-sizing: border-box; }
body { margin: 0; background: #000; color: #222; font: 11px/14px "Open Sans", "Noto Sans", sans-serif; }
button { font: inherit; color: inherit; background: none; border: 0; padding: 0; margin: 0; display: flex; align-items: center; justify-content: center; white-space: nowrap; }
svg { display: block; flex: none; fill: none; stroke: #444; }
svg use, symbol { stroke: none; }
h1, h2, p, ul { margin: 0; padding: 0; font-size: inherit; font-weight: normal; }
.defs { position: absolute; width: 0; height: 0; }
.app { min-height: 100vh; display: flex; flex-direction: column; padding: 19px 0; }
.caret { flex: none; width: 0; height: 0; border: 2px solid transparent; border-top: 3px solid #444; border-bottom: 0; }
.caret.wide { border-width: 4px 3px 0; display: inline-block; vertical-align: middle; margin-left: 3px; }

/* title bar and tabs */
.top { display: grid; grid-template: 22px 20px / 39px 1fr; background: #9a9a9a; }
.logo { grid-row: 1 / 3; margin-bottom: 4px; gap: 3px; background: linear-gradient(#a8a8a8, #6e6e6e); border: 1px solid #444; }
.logo svg { stroke: none; }
.logo .caret { border-width: 4px 3px 0; border-top-color: #222; }
.titlebar { display: flex; }
.qat { width: 422px; display: flex; align-items: center; justify-content: space-between; padding: 0 6px 0 7px; background: #fdf3f5; }
.qat svg { width: 15px; height: 15px; stroke: #d66f85; stroke-width: 1.2; }
.qat .caret { border-top-color: #d8798c; }
.qat .faint { opacity: .25; }
.title { flex: 1; background: #b64d64; font-size: 14px; line-height: 22px; padding-left: 34px; color: #2a1018; white-space: nowrap; }
.info { width: 452px; display: flex; align-items: center; gap: 5px; padding-right: 15px; background: linear-gradient(#e6e6e6, #bdbdbd); }
.info svg { width: 17px; height: 17px; }
.info .expand { width: 8px; }
.info .expand svg { width: 6px; height: 8px; stroke: none; }
.search { width: 169px; height: 21px; border: 1px solid #222; border-width: 1px 2px; padding: 0 3px; background: #fff; font: italic 11px "Open Sans", sans-serif; }
.search::placeholder { color: #555; opacity: 1; }
.user { gap: 3px; margin-right: auto; }
.exchange { margin: 0 3px 0 5px; }
.help { border-left: 1px solid #bbb; padding-left: 7px; }
.window { width: 113px; display: flex; justify-content: space-around; background: #c04259; padding: 0 2px 4px 14px; }
.window svg { width: 13px; height: 13px; stroke: #40101a; }
.window .close { stroke: #fff; }
.tabs { display: flex; padding-left: 4px; }
.tabs button { padding: 0 8px 0 9px; }
.tabs .on { background: #dcf5cf; border: 2px solid #86e05c; border-bottom: 0; padding: 0 5px; }
.tabs .cycle { margin-left: 12px; }
.cycle svg { stroke: none; }

/* ribbon */
.ribbon { display: flex; height: 88px; border-bottom: 1px solid #7da55c; border-top: 1px solid #a9cf90; background: linear-gradient(#cfe6c2, #a2a4a0 80%, #999); }
.panel { display: flex; flex-direction: column; background: #fdfdfd; border-right: 1px solid #c4c8c0; }
.name { height: 17px; line-height: 16px; text-align: center; background: #ececec; white-space: nowrap; }
.green .name { background: #d3f0c0; }
.green.first { border-left: 4px solid #aaa; }
.w46 { width: 46px; } .w52 { width: 52px; } .w53 { width: 53px; } .w54 { width: 54px; } .w60 { width: 60px; } .w61 { width: 61px; }
.w75 { width: 76px; } .w77 { width: 77px; } .w85 { width: 85px; } .w89 { width: 89px; } .w113 { width: 113px; } .w130 { width: 130px; } .w223 { width: 223px; }
.tools { flex: 1; display: flex; justify-content: center; padding: 2px 2px 1px; }
.col svg, .grid3 svg, .gridv svg, .place svg { width: 16px; height: 16px; }
.stack { flex-direction: column; align-items: center; justify-content: space-between; }
.stack .on { width: 36px; height: 31px; }
.on { background: #c5dcf2; border: 1px solid #6f9fd0; }
.big { flex-direction: column; justify-content: flex-start; padding: 2px 3px 0; gap: 4px; }
.big svg { stroke-width: 1.2; }
.broad { width: 68px; }
.divided { border-left: 1px solid #d6d6d6; width: 42px; }
.select { width: 42px; padding: 6px 0 0; gap: 6px; }
.off { color: #aaa; width: 48px; }
.off .caret { border-top-color: #aaa; }
.dim svg { stroke: #b4b4b4; }
.col { display: grid; grid-template-rows: repeat(3, 22px); align-items: center; width: 24px; }
.words { width: 66px; margin-right: 2px; }
.words button { justify-content: flex-start; gap: 4px; }
.w130 .tools { padding-left: 4px; align-items: flex-start; }
.w130 .tools > .caret { margin-top: 32px; }
.grid4 { display: grid; grid-template: repeat(2, 33px) / repeat(4, 36px); }
.grid4 svg, .grid2 svg, .gridm svg { width: 28px; height: 28px; }
.grid3 { display: grid; grid-template: repeat(3, 22px) / repeat(3, 23px); margin-left: 3px; }
.gridv { display: grid; grid-template: repeat(2, 23px) / 22px 8px 24px; align-content: center; align-items: center; }
.gridm { display: grid; grid-template: repeat(2, 33px) / 34px 12px; align-items: center; justify-items: center; }
.grid2 { display: grid; grid-template: repeat(2, 33px) / repeat(2, 36px); }
.place { flex-direction: column; align-items: stretch; }
.row { height: 20px; justify-content: flex-start; gap: 3px; padding-left: 2px; color: #aaa; border: 1px solid #ddd; }
.row.on { border-color: #6f9fd0; color: #8e9cac; }
.row svg { stroke: #b4bcc4; }

/* options bar */
.options { display: flex; align-items: center; height: 27px; padding-left: 8px; background: #d9e4d1; border-bottom: 1px solid #777; }
.options span { width: 164px; line-height: 20px; border-right: 1px solid #aab4a4; }
.options button { height: 21px; margin-left: 8px; padding: 0 3px; background: #f0f0f0; border: 1px solid #aaa; }

/* project browser */
.work { flex: 1; display: flex; background: #f0f0f0; }
.dock { width: 288px; display: flex; flex-direction: column; padding-right: 1px; }
.dock-head { display: flex; justify-content: space-between; align-items: center; height: 16px; padding: 0 4px; background: #bccbdc; }
.dock-body { flex: 1; display: flex; margin: 4px 3px 0 2px; border: 2px solid #777; border-width: 2px 0 0 2px; background: #fdfdfd; }
.tree { flex: 1; display: flex; flex-direction: column; list-style: none; height: 456px; }
.tree li { flex: 1; display: flex; align-items: center; min-height: 0; white-space: nowrap; }
.tree span { padding: 0 3px; line-height: 15px; }
.ti { width: 16px; height: 16px; margin: 0 1px; }
.tree .sub { margin-left: 3px; }
.sel { background: #dcdcdc; font-weight: bold; }
.c { align-self: stretch; width: 19px; position: relative; display: flex; align-items: center; justify-content: center; }
.c.v::before, .c.h::before, .c.t::before { content: ""; position: absolute; left: 9px; top: 0; bottom: 0; border-left: 1px dotted #999; }
.c.end::before { bottom: 50%; }
.c.first::before { top: 50%; }
.c.h::after, .c.t::after { content: ""; position: absolute; left: 9px; right: -3px; top: 50%; border-top: 1px dotted #999; }
.c button { position: relative; z-index: 1; width: 9px; height: 9px; background: #fff; border: 1px solid #888; font-size: 10px; line-height: 7px; color: #555; }
.vscroll { width: 14px; display: flex; flex-direction: column; align-items: stretch; background: #efefef; }
.vscroll button { height: 17px; }
.vscroll .thumb { height: 431px; background: #cbcbcb; margin-bottom: auto; flex: 0 1 auto; }
.chev { stroke: #444; stroke-width: 2; }
.dock .vscroll { height: 457px; }
.dock .thumb { flex: 0 1 408px; min-height: 0; }
.dock-tabs { display: flex; height: 21px; border-top: 1px solid #222; padding: 0 3px 1px 2px; font-family: Roboto, sans-serif; }
.dock-tabs button { flex: 1 1 auto; border: 1px solid #888; border-top: 0; border-radius: 0 0 3px 3px; padding: 0 4px; }
.dock-tabs .on { background: #f6f6f6; border-left-color: #ccc; }

/* drawing area */
.view { flex: 1; min-width: 0; display: flex; flex-direction: column; margin-left: 4px; border-left: 2px solid #777; }
.canvas-row { flex: 1; display: flex; min-height: 0; }
.canvas { flex: 1; position: relative; background: #fdfdfd; overflow: hidden; }
.plan { position: absolute; inset: 0; width: 100%; height: 100%; stroke: none; }
.picked { --bowl: #8a9fdd; --neck: #6681d0; --cap: #4967c8; --ink: #1238b0; --seam: #3454b8; --body: #8098dc; }
.plain { --bowl: none; --neck: none; --cap: none; --ink: #000; --seam: none; --body: #fdfdfd; }
.bowl { fill: var(--bowl); stroke: var(--ink); }
.neck { fill: var(--neck); stroke: none; }
.seam { fill: none; stroke: var(--seam); }
.cap { fill: var(--cap); stroke: var(--ink); }
.body { fill: var(--body); stroke: var(--ink); }
.ink, .edge { fill: none; stroke: var(--ink); }
.notes { font: 10px "Liberation Sans", Arial, sans-serif; fill: #555; }
.dim-in { fill: #2a2ab8; }
.mdi { position: absolute; top: 7px; right: 3px; display: flex; gap: 5px; }
.mdi svg { width: 12px; height: 12px; fill: #fff; }
.navbar { position: absolute; top: 27px; right: 1px; width: 33px; height: 110px; display: flex; flex-direction: column; align-items: center; gap: 4px; padding-top: 17px; border: 2px solid #c4c4c4; border-radius: 4px; background: rgba(242, 242, 242, .6); }
.navbar svg { stroke: #999; }
.navbar .caret { border-top-color: #888; }
.navbar hr { width: 24px; margin: 0; border: 0; border-top: 1px solid #bbb; }
.vscroll.main { width: 16px; }
.main .thumb { height: 16px; margin-top: 217px; }
.viewbar { display: flex; align-items: center; height: 17px; background: #eee; padding-left: 18px; }
.viewbar svg { width: 15px; height: 15px; }
.viewbar button { width: 20px; }
.viewbar .scale { width: 54px; justify-content: flex-start; padding-left: 4px; }
.viewbar .narrow { width: 14px; }
.viewbar .narrow svg { width: 8px; height: 10px; }
.htrack { flex: 1; align-self: stretch; display: flex; }
.htrack i { width: 16px; margin-left: 48%; background: #cbcbcb; }
.grip { width: 10px; height: 9px; margin: 0 2px 0 6px; background: radial-gradient(#aaa 1px, transparent 1px) 0 0 / 3px 3px; }

/* status bar */
.status { display: flex; align-items: center; height: 23px; padding: 0 61px 0 2px; border-top: 2px solid #b8b8b8; background: linear-gradient(#dedede, #c9c9c9); font-family: Roboto, sans-serif; }
.status svg { width: 17px; height: 17px; }
.status p { width: 397px; white-space: nowrap; }
.status select { appearance: none; height: 19px; border: 1px solid #ddd; border-radius: 0; padding: 0 3px; font: inherit; color: #888; background: #fdfdfd url("data:image/svg+xml,%3Csvg xmlns='http://www.w3.org/2000/svg' width='8' height='6'%3E%3Cpath d='M1 1l3 3 3-3' fill='none' stroke='%23999' stroke-width='2'/%3E%3C/svg%3E") no-repeat right 3px center; }
.workset { width: 192px; margin: 0 7px 0 6px; }
.model { width: 146px; margin-left: 6px; }
.faded { opacity: .6; }
.count { font-size: 12px; }
.mid { margin: 0 7px 0 21px; }
.picks { margin-left: auto; display: flex; align-items: center; gap: 7px; }
.picks .count { margin-left: -7px; }
```
